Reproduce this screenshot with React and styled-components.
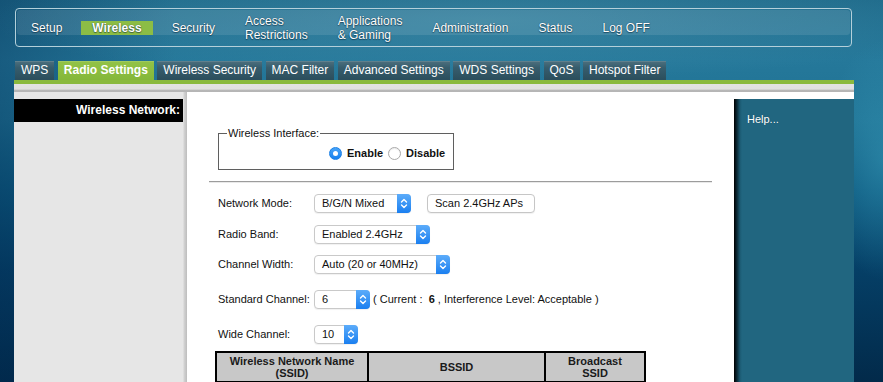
import React from 'react';
import styled, { createGlobalStyle } from 'styled-components';

const Global = createGlobalStyle`
  html, body { margin: 0; padding: 0; }
  body {
    width: 883px; height: 382px; overflow: hidden;
    font-family: "Liberation Sans", Arial, Helvetica, sans-serif;
  }
`;

const Page = styled.div`
  width: 883px;
  height: 382px;
  overflow: hidden;
  box-sizing: border-box;
  padding: 8px 29px 0 14px;
  background:
    radial-gradient(ellipse 60px 120px at 100% 160px, rgba(60, 160, 190, 0.45), transparent 100%),
    radial-gradient(ellipse 500px 60px at 55% 20px, rgba(90, 160, 185, 0.35), transparent 100%),
    linear-gradient(to right, rgba(0, 40, 80, 0.35), transparent 20%, transparent 85%, rgba(0, 0, 0, 0) 100%),
    linear-gradient(180deg, #1f6b8b 0px, #25789a 60px, #1f7294 120px, #0d5a80 190px, #053f66 270px, #022a4a 382px);
`;

const NavBox = styled.nav`
  position: relative;
  box-sizing: border-box;
  height: 39px;
  width: 837px;
  margin-left: 1px;
  border: 1px solid #b4d0da;
  border-radius: 4px;
  display: flex;
  align-items: center;
  gap: 8px;
  padding-left: 4px;
  &::before {
    content: '';
    position: absolute;
    left: 1px;
    right: 1px;
    top: 1px;
    height: 25px;
    border-radius: 3px;
    background: rgba(255, 255, 255, 0.1);
  }
`;

const NavItem = styled.span`
  position: relative;
  padding: 0 11px;
  font-size: 12px;
  line-height: 14px;
  color: #fff;
  font-weight: ${p => (p.$active ? 'bold' : 'normal')};
  background: ${p => (p.$active ? '#8cbd45' : 'transparent')};
  text-shadow: 0 0 1px rgba(0, 30, 50, 0.7), 0 1px 1px rgba(0, 30, 50, 0.5);
  white-space: nowrap;
`;

const Tabs = styled.div`
  display: flex;
  gap: 3.5px;
  margin: 14px 0 0 1px;
  height: 19px;
`;

const Tab = styled.span`
  padding: 0 6px;
  font-size: 12px;
  line-height: 19px;
  color: #fff;
  white-space: nowrap;
  font-weight: ${p => (p.$active ? 'bold' : 'normal')};
  background: ${p =>
    p.$active
      ? 'linear-gradient(#93c347, #84b73a)'
      : 'linear-gradient(#4d707e 0, #375d6d 35%, #2b4e5c 100%)'};
  box-shadow: inset 0 1px 0 rgba(255, 255, 255, 0.12);
`;

const GreenBar = styled.div`
  height: 4px;
  width: 840px;
  background: #8aba3e;
`;

const GreyBand = styled.div`
  height: 8px;
  width: 840px;
  background: linear-gradient(#e3e3e3 0, #e1e1e1 5px, #c4c4c4 6px, #a9a9a9 7px, #c2c2c2 8px);
`;

const Content = styled.div`
  display: grid;
  grid-template-columns: 173px 547px 120px;
  width: 840px;
  height: 290px;
  background: #fff;
`;

const Side = styled.aside`
  padding-top: 7px;
  background: linear-gradient(to right, #e6e6e6 169px, #d3d3d3 170px, #bdbdbd 173px);
`;

const SideTitle = styled.div`
  box-sizing: border-box;
  width: 169px;
  height: 23px;
  background: #000;
  color: #fff;
  font-size: 12px;
  font-weight: bold;
  line-height: 23px;
  text-align: right;
  padding-right: 3px;
`;

const Main = styled.main`
  padding: 34.5px 22px 0 22px;
  color: #111;
  font-size: 11px;
`;

const Fieldset = styled.fieldset`
  box-sizing: border-box;
  width: 236px;
  margin: 0 0 0 9px;
  padding: 7px 8px 9px;
  border: 1px solid #5f5f5f;
`;

const Legend = styled.legend`
  font-size: 11px;
  line-height: 13px;
  padding: 0 1px;
`;

const RadioRow = styled.div`
  display: flex;
  align-items: center;
  height: 13px;
  padding-left: 102px;
  gap: 5px;
  font-weight: bold;
  font-size: 11px;
`;

const RadioDot = styled.span`
  box-sizing: border-box;
  width: 13px;
  height: 13px;
  border-radius: 50%;
  display: flex;
  align-items: center;
  justify-content: center;
  background: ${p => (p.$on ? 'linear-gradient(#48a4f8, #1580ef)' : '#fff')};
  border: 1px solid ${p => (p.$on ? '#1a7fe6' : '#a9a9a9')};
  box-shadow: ${p => (p.$on ? 'none' : 'inset 0 1px 1px rgba(0,0,0,0.08)')};
  &::after {
    content: '';
    display: ${p => (p.$on ? 'block' : 'none')};
    width: 5px;
    height: 5px;
    border-radius: 50%;
    background: #fff;
  }
`;

const Divider = styled.hr`
  margin: 11px 0 0 0;
  height: 0;
  border: 0;
  border-top: 1px solid #9c9c9c;
  border-bottom: 1px solid #e9e9e9;
`;

const Row = styled.div`
  display: flex;
  align-items: center;
  height: 19px;
  margin: ${p => p.$mt}px 0 0 9px;
`;

const Label = styled.span`
  width: 96px;
  flex: none;
  font-size: 11px;
`;

const SelectBox = styled.div`
  box-sizing: border-box;
  display: flex;
  align-items: center;
  width: ${p => p.$w}px;
  height: 19px;
  border: 1px solid #c9c9c9;
  border-radius: 4px;
  background: #fff;
  padding-left: 7px;
  font-size: 11px;
  color: #111;
  box-shadow: 0 1px 1px rgba(0, 0, 0, 0.06);
`;

const SelectArrow = styled.span`
  box-sizing: border-box;
  margin: -1px -1px -1px auto;
  width: 14px;
  height: 19px;
  border-radius: 0 4px 4px 0;
  background: linear-gradient(#5cacfa, #1a7ff0);
  display: flex;
  align-items: center;
  justify-content: center;
`;

const Button = styled.span`
  box-sizing: border-box;
  display: flex;
  align-items: center;
  margin-left: 16px;
  width: 108px;
  height: 19px;
  padding-left: 7px;
  border: 1px solid #c6c6c6;
  border-radius: 4px;
  background: #fff;
  font-size: 11px;
  box-shadow: 0 1px 1px rgba(0, 0, 0, 0.06);
`;

const Note = styled.span`
  margin-left: 3px;
  font-size: 11px;
  white-space: pre;
`;

const Table = styled.table`
  margin: 7px 0 0 6px;
  border-collapse: collapse;
  border: 2px solid #000;
`;

const Th = styled.th`
  width: ${p => p.$w}px;
  height: 28px;
  padding: 0 2px;
  border: 2px solid #000;
  background: #c8c8c8;
  font-size: 11px;
  line-height: 12px;
  font-weight: bold;
  color: #1a1a1a;
  text-align: center;
`;

const Help = styled.aside`
  margin-top: 7px;
  padding: 13.5px 0 0 13px;
  background: linear-gradient(to right, #000 0, #0b2a36 3px, #1b5a72 6px, #216680 8px);
  color: #fff;
  font-size: 11px;
  line-height: 13px;
  text-shadow: 0 0 1px rgba(0, 0, 0, 0.3);
`;

const Chevrons = () => (
  <svg width="8" height="11" viewBox="0 0 8 11" fill="none" stroke="#fff" strokeWidth="1.4" strokeLinecap="round" strokeLinejoin="round">
    <path d="M1.5 4 L4 1.5 L6.5 4" />
    <path d="M1.5 7 L4 9.5 L6.5 7" />
  </svg>
);

const Select = ({ w, children }) => (
  <SelectBox $w={w}>
    <span>{children}</span>
    <SelectArrow><Chevrons /></SelectArrow>
  </SelectBox>
);

const navItems = [
  ['Setup'],
  ['Wireless', true],
  ['Security'],
  [<>Access<br />Restrictions</>],
  [<>Applications<br />&amp; Gaming</>],
  ['Administration'],
  ['Status'],
  ['Log OFF'],
];

const tabs = [
  ['WPS'],
  ['Radio Settings', true],
  ['Wireless Security'],
  ['MAC Filter'],
  ['Advanced Settings'],
  ['WDS Settings'],
  ['QoS'],
  ['Hotspot Filter'],
];

export default function App() {
  return (
    <>
      <Global />
      <Page>
        <NavBox>
          {navItems.map(([label, active], i) => (
            <NavItem key={i} $active={active}>{label}</NavItem>
          ))}
        </NavBox>
        <Tabs>
          {tabs.map(([label, active]) => (
            <Tab key={label} $active={active}>{label}</Tab>
          ))}
        </Tabs>
        <GreenBar />
        <GreyBand />
        <Content>
          <Side>
            <SideTitle>Wireless Network:</SideTitle>
          </Side>
          <Main>
            <Fieldset>
              <Legend>Wireless Interface:</Legend>
              <RadioRow>
                <RadioDot $on />
                <span>Enable</span>
                <RadioDot />
                <span>Disable</span>
              </RadioRow>
            </Fieldset>
            <Divider />
            <Row $mt={11}>
              <Label>Network Mode:</Label>
              <Select w={97}>B/G/N Mixed</Select>
              <Button>Scan 2.4GHz APs</Button>
            </Row>
            <Row $mt={12}>
              <Label>Radio Band:</Label>
              <Select w={116}>Enabled 2.4GHz</Select>
            </Row>
            <Row $mt={11}>
              <Label>Channel Width:</Label>
              <Select w={136}>Auto (20 or 40MHz)</Select>
            </Row>
            <Row $mt={16}>
              <Label>Standard Channel:</Label>
              <Select w={56}>6</Select>
              <Note>( Current :  <b>6</b> , Interference Level: Acceptable )</Note>
            </Row>
            <Row $mt={16}>
              <Label>Wide Channel:</Label>
              <Select w={44}>10</Select>
            </Row>
            <Table>
              <thead>
                <tr>
                  <Th $w={146}>Wireless Network Name<br />(SSID)</Th>
                  <Th $w={171}>BSSID</Th>
                  <Th $w={94}>Broadcast<br />SSID</Th>
                </tr>
              </thead>
            </Table>
          </Main>
          <Help>Help...</Help>
        </Content>
      </Page>
    </>
  );
}
